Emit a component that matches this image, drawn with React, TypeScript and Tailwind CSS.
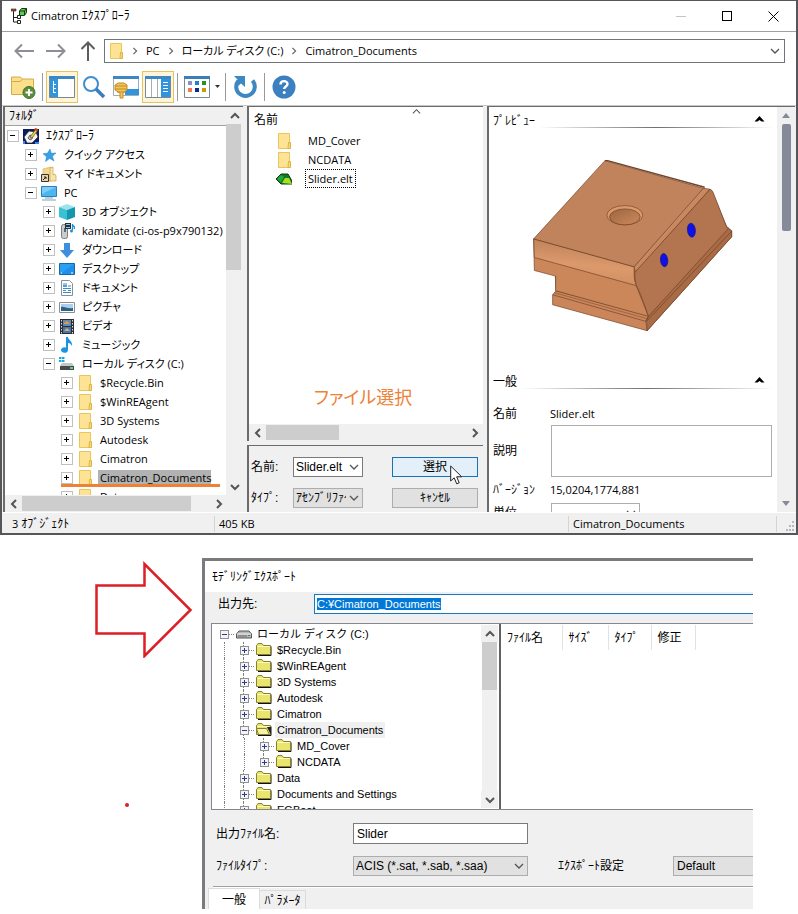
import { useEffect, useRef } from "react";
import type { ReactNode } from "react";

const UI = "font-['Open_Sans','Noto_Sans_CJK_JP',sans-serif] [font-feature-settings:'palt']";
const GOTHIC = "font-['Liberation_Sans','Noto_Sans_CJK_JP',sans-serif]";

/* ---------- small drawings ---------- */

function Chevron({ dir, size = 10, color = "#555", width = 2 }: { dir: "up" | "down" | "left" | "right"; size?: number; color?: string; width?: number }) {
  const d = { up: "M1 7l4-4 4 4", down: "M1 3l4 4 4-4", left: "M7 1L3 5l4 4", right: "M3 1l4 4-4 4" }[dir];
  return (
    <svg width={size} height={size} viewBox="0 0 10 10" fill="none" stroke={color} strokeWidth={width} className="shrink-0">
      <path d={d} />
    </svg>
  );
}

function Folder() {
  return (
    <svg width="16" height="16" viewBox="0 0 16 16" className="shrink-0">
      <path d="M2.500.5h11v15h-11z" fill="#ffe395" stroke="#e8c65c" />
      <path d="M12.500 9.500h2v6h-2.500z" fill="#fbd971" stroke="#dcb445" />
    </svg>
  );
}

function TreeIcon({ kind }: { kind: string }) {
  const box = { width: 16, height: 16, viewBox: "0 0 16 16", className: "shrink-0" };
  switch (kind) {
    case "explorer":
      return (
        <svg {...box}>
          <path d="M0 1h16v15H0z" fill="#0c1c5c" />
          <path d="M1 9l5-6 7 1 2 5-6 6H4z" fill="#f4f4f4" stroke="#222" strokeWidth=".7" />
          <path d="M5 10l2-3 3 1-1 3-2 1z" fill="#bbb" stroke="#222" strokeWidth=".6" />
          <path d="M7 9l6-8 2 1-6 8z" fill="#e9d53f" stroke="#4a3c10" strokeWidth=".6" />
          <path d="M12 0l3 1-1 2-3-1z" fill="#c43a1e" />
          <path d="M12 14h4v2h-4zM0 13h2v3H0z" fill="#3b82f6" />
        </svg>
      );
    case "star":
      return (
        <svg {...box}>
          <path d="M9 2l1.300 4.300L15 6l-3.600 3.200L13 14l-4.300-2.500L4.500 14.500l1-4.800L2 6.700l4.600-.6z" fill="#38a0e6" stroke="#2488d2" strokeWidth=".5" />
        </svg>
      );
    case "mydocs":
      return (
        <svg {...box}>
          <path d="M2 3l8-2v14H2z" fill="#f4d891" stroke="#d9b45c" strokeWidth=".7" />
          <path d="M9 2l3-1v8l2-1 1 2v5H9z" fill="#f8e5ae" stroke="#c9a04a" strokeWidth=".7" />
          <path d="M.5 8.500h7v7h-7z" fill="#e8d5ae" stroke="#333" />
          <path d="M2 14l3-3M3 11h2v2" stroke="#222" fill="none" />
        </svg>
      );
    case "pc":
      return (
        <svg {...box}>
          <path d="M.5 1.500h15v10H.5z" fill="#4bb5ef" stroke="#2b7fb2" />
          <path d="M1 2h14L1 9z" fill="#7dcdf7" />
          <path d="M4 13h8M1 15h14" stroke="#7aa3b8" />
        </svg>
      );
    case "cube":
      return (
        <svg {...box}>
          <path d="M8 0l8 3-8 3-8-3z" fill="#9be4ee" />
          <path d="M0 3l8 3v10l-8-3z" fill="#3cc0d4" />
          <path d="M16 3L8 6v10l8-3z" fill="#1596ad" />
        </svg>
      );
    case "phone":
      return (
        <svg {...box}>
          <rect x="2.500" y="1.500" width="6" height="14" rx="2" fill="#c9cccf" stroke="#7a7d80" />
          <path d="M5 5h2v4H5z" fill="#666" />
          <path d="M6 0h6v6H6z" fill="#27333d" />
          <path d="M7 1h4v1H7zM7 4h4v1H7z" fill="#8fc7e8" />
          <path d="M13.500 1v6M13.500 2l2 2v2" stroke="#1e8fd8" fill="none" strokeWidth="1.300" />
          <circle cx="12.500" cy="8" r="1.500" fill="#1e8fd8" />
        </svg>
      );
    case "download":
      return (
        <svg {...box}>
          <path d="M5 1h6v7h4l-7 8-7-8h4z" fill="#3e8fe0" />
        </svg>
      );
    case "desktop":
      return (
        <svg {...box}>
          <path d="M.5 2.500h15v11H.5z" fill="#2aa0f5" stroke="#1669a8" />
          <path d="M1 13L15 3v10z" fill="#1e90ea" />
          <path d="M2 12h1M12 12h2" stroke="#fff" />
        </svg>
      );
    case "document":
      return (
        <svg {...box}>
          <path d="M2.500.5h8l3 3v12h-11z" fill="#fff" stroke="#8a8f94" />
          <path d="M4 4h4M9 6h3M4 8.500h8M4 10.500h3M4 12.500h8M9 10.500h3" stroke="#3f8ac0" />
          <path d="M4 5h4v2H4z" fill="#4aa2dc" />
        </svg>
      );
    case "picture":
      return (
        <svg {...box}>
          <path d="M.5 3.500h15v10H.5z" fill="#fff" stroke="#8a8f94" />
          <path d="M2 5h12v7H2z" fill="#a9d0ee" />
          <path d="M2 8c3-1 6 2 12 1v3H2z" fill="#31627f" />
        </svg>
      );
    case "video":
      return (
        <svg {...box}>
          <path d="M1 1h14v15H1z" fill="#2e2e33" />
          <path d="M4 2h8v6H4z" fill="#6287b9" />
          <path d="M4 9h8v6H4z" fill="#4675b4" />
          <path d="M5 5l3-2 3 3H5z" fill="#d9a23c" />
          <path d="M5 13l3-3 3 3z" fill="#c9b56a" />
          <path d="M2.500 2v14M13.500 2v14" stroke="#ddd" strokeDasharray="1.500 1.500" />
        </svg>
      );
    case "music":
      return (
        <svg {...box}>
          <path d="M7 0h2c0 3 5 4 4 9-1-2-2-3-4-3v7a3.500 2.800 0 1 1-2-2.500z" fill="#1b94e6" />
        </svg>
      );
    case "drive":
      return (
        <svg {...box}>
          <path d="M0 1h2.500v2H0zM3 1h2.500v2H3zM0 4h2.500v2H0zM3 4h2.500v2H3z" fill="#1aa8e0" />
          <path d="M3 7h10l2 3H1z" fill="#c4c7ca" />
          <path d="M1 10h14v4H1z" fill="#444a4e" />
          <path d="M11 11h3v2h-3z" fill="#54d66a" />
        </svg>
      );
    default:
      return <Folder />;
  }
}

function PartPreview() {
  return (
    <svg width="201" height="175" viewBox="36 84 604 524" className="shrink-0" role="img" aria-label="Slider.elt" strokeLinejoin="round">
      <defs>
        <linearGradient id="fillet" x1="0" y1="0" x2="-.2" y2="1">
          <stop offset="0" stopColor="#c1835b" />
          <stop offset=".45" stopColor="#dc9a6c" />
          <stop offset="1" stopColor="#cb865a" />
        </linearGradient>
        <linearGradient id="edge" x1="0" y1="0" x2="1" y2="1">
          <stop offset="0" stopColor="#e0a177" />
          <stop offset="1" stopColor="#ad6f49" />
        </linearGradient>
        <linearGradient id="bore" x1="0" y1="0" x2="1" y2="1">
          <stop offset="0" stopColor="#9d6540" />
          <stop offset="1" stopColor="#cc8a5e" />
        </linearGradient>
      </defs>
      <g stroke="#6e4226" strokeWidth="2">
        <path d="M345 425L560 178q14-4 20 14l42 100 14 10v18L382 602l4-45z" fill="#b27550" />
        <path d="M106 438l238 0 44 118-280-74z" fill="#cb855a" />
        <path d="M98 494l10-12 280 76-10 14 4 30-284-78z" fill="#cb855a" />
        <path d="M98 494l280 80 8-16" fill="none" />
        <path d="M104 488l278 78" fill="none" stroke="#87563a" />
        <path d="M382 602L636 320v-18l-12-10-238 266-6 16z" fill="#a96b46" />
        <path d="M380 574L636 303" fill="none" />
        <path d="M41 326l302 84q2 34 6 56 20 50 37 93L107 482v-44l-64-17z" fill="#cb865a" />
        <path d="M41 326l302 84v26q0 18 8 31L43 382z" fill="url(#fillet)" />
        <path d="M255 91l300 84-212 235-302-84z" fill="#c1835b" />
        <path d="M343 410L551 174l20 3L347 427z" fill="url(#edge)" />
        <path d="M345 427L571 177q8 2 12 16l38 98q10 0 0 10l-235 258q-26-76-37-94-5-18-4-38z" fill="#b27550" />
        <path d="M255 91l8 0 292 80" fill="none" stroke="#70442c" strokeWidth="4" />
        <ellipse cx="315" cy="255" rx="54" ry="29" fill="#d99a6e" />
        <ellipse cx="315" cy="260" rx="46" ry="24" fill="url(#bore)" />
      </g>
      <ellipse cx="515" cy="300" rx="12" ry="21" fill="#1010e8" stroke="#1a1770" strokeWidth="2" transform="rotate(-6 515 300)" />
      <ellipse cx="433" cy="390" rx="11" ry="20" fill="#1010e8" stroke="#1a1770" strokeWidth="2" transform="rotate(-6 433 390)" />
    </svg>
  );
}

/* ---------- shared controls ---------- */

function ScrollButton({ dir, label }: { dir: "up" | "down" | "left" | "right"; label: string }) {
  return (
    <button type="button" aria-label={label} className="flex size-[17px] shrink-0 items-center justify-center bg-[#f0f0f0]">
      <Chevron dir={dir} />
    </button>
  );
}

function Select({ id, options, className }: { id: string; options: string[]; className: string }) {
  return (
    <div className={"relative " + className}>
      <select id={id} className="h-full w-full appearance-none rounded-none bg-transparent pr-4 pl-[2px] outline-none">
        {options.map((o) => (
          <option key={o}>{o}</option>
        ))}
      </select>
      <span className="pointer-events-none absolute inset-y-0 right-[3px] flex items-center">
        <Chevron dir="down" width={1.3} />
      </span>
    </div>
  );
}

/* ---------- explorer window ---------- */

function Separator() {
  return <span className="mx-[3px] h-7 w-px shrink-0 bg-[#9a9a9a]" />;
}

function Tool({ label, active, children }: { label: string; active?: boolean; children: ReactNode }) {
  return (
    <button
      type="button"
      aria-label={label}
      className={"flex size-8 shrink-0 items-center justify-center border " + (active ? "border-[#e5c365] bg-[#fdf4da]" : "border-transparent")}
    >
      {children}
    </button>
  );
}

function Toolbar() {
  return (
    <div className="flex h-[33px] items-center pl-[5px]">
      <Tool label="新規フォルダ">
        <svg width="26" height="24" viewBox="0 0 26 24" className="shrink-0">
          <path d="M1.500 5.500v-3.500h9l2 2h11v15.500h-22z" fill="#fbdf8b" stroke="#d4ab4a" />
          <path d="M1.500 6.500h9l2-2.500" fill="none" stroke="#d4ab4a" />
          <circle cx="19" cy="17.500" r="6" fill="#5b8f3c" stroke="#466f2e" />
          <path d="M19 14v7M15.500 17.500h7" stroke="#fff" strokeWidth="2" />
        </svg>
      </Tool>
      <Separator />
      <Tool label="フォルダ表示" active>
        <svg width="26" height="22" viewBox="0 0 26 22" className="shrink-0">
          <path d="M.5.5h25v21H.5z" fill="#fff" stroke="#7c8890" />
          <path d="M0 0h26v3H0z" fill="#3d87c2" />
          <path d="M1 3h8v18H1z" fill="#2f94de" />
          <path d="M4.500 5v12M4 8.500h3M4 12.500h3M4 16.500h3" stroke="#fff" fill="none" />
        </svg>
      </Tool>
      <Tool label="検索">
        <svg width="24" height="24" viewBox="0 0 24 24" fill="none" className="shrink-0">
          <circle cx="9" cy="9" r="7" stroke="#3d8fd0" strokeWidth="2" />
          <path d="M14 14l8 8" stroke="#3a7fbb" strokeWidth="3.500" />
        </svg>
      </Tool>
      <Tool label="フィルタ">
        <svg width="26" height="24" viewBox="0 0 26 24" className="shrink-0">
          <path d="M.5 1.500h25v19H.5z" fill="#fff" stroke="#a5adb3" />
          <path d="M0 1h26v3H0z" fill="#3d87c2" />
          <path d="M12 14h14v6H12z" fill="#2f94de" />
          <path d="M5 8h6l3 2v5l-4 3v5H7v-5l-5-3v-5z" fill="#f3c35b" stroke="#c38d24" />
          <path d="M2 11h12M2 14h12M4 17h8" stroke="#c38d24" />
        </svg>
      </Tool>
      <Tool label="プレビュー表示" active>
        <svg width="26" height="22" viewBox="0 0 26 22" className="shrink-0">
          <path d="M.5.5h25v21H.5z" fill="#fff" stroke="#7c8890" />
          <path d="M0 0h26v3H0z" fill="#3d87c2" />
          <path d="M6.500 3v18M12.500 3v18" stroke="#a5adb3" />
          <path d="M16 3h9v18h-9z" fill="#2f94de" />
          <path d="M18 6.500h5M18 9.500h5M18 12.500h5M18 15.500h5" stroke="#fff" />
        </svg>
      </Tool>
      <Separator />
      <Tool label="表示">
        <svg width="26" height="22" viewBox="0 0 26 22" className="shrink-0">
          <path d="M.5.5h25v21H.5z" fill="#fff" stroke="#7c8890" />
          <path d="M0 0h26v3H0z" fill="#3d7fb4" />
          <path d="M4 5h4v4H4z" fill="#8f8fc8" />
          <path d="M11 5h4v4h-4z" fill="#2480d0" />
          <path d="M18 5h4v4h-4z" fill="#259425" />
          <path d="M4 12h4v4H4z" fill="#f4784c" />
          <path d="M11 12h4v4h-4z" fill="#102a86" />
          <path d="M18 12h4v4h-4z" fill="#c99a0c" />
        </svg>
      </Tool>
      <button type="button" aria-label="表示オプション" className="flex h-8 w-[9px] shrink-0 items-center justify-center">
        <svg width="5" height="3" viewBox="0 0 5 3">
          <path d="M0 0h5L2.500 3z" fill="#333" />
        </svg>
      </button>
      <Separator />
      <Tool label="更新">
        <svg width="24" height="24" viewBox="0 0 24 24" fill="none" className="shrink-0">
          <path d="M19.500 5.500a9.300 9.300 0 1 1-14 0" stroke="#3d87c2" strokeWidth="4" />
          <path d="M1 1h11v11L8 8.500 5 11V5z" fill="#3d87c2" />
        </svg>
      </Tool>
      <Separator />
      <Tool label="ヘルプ">
        <svg width="24" height="24" viewBox="0 0 24 24" className="shrink-0">
          <circle cx="12" cy="12" r="11.500" fill="#3d80c0" />
          <path d="M8.500 9.500c0-4.500 7-4.300 7-.5 0 2.500-3.300 2.500-3.300 5" fill="none" stroke="#fff" strokeWidth="2.400" />
          <circle cx="12.200" cy="17.500" r="1.500" fill="#fff" />
        </svg>
      </Tool>
    </div>
  );
}

type Node = { level: number; open?: boolean; icon: string; text: string; half?: boolean; selected?: boolean };

const folders: Node[] = [
  { level: 0, open: true, icon: "explorer", text: "ｴｸｽﾌﾟﾛｰﾗ", half: true },
  { level: 1, icon: "star", text: "クイック アクセス" },
  { level: 1, icon: "mydocs", text: "マイ ドキュメント" },
  { level: 1, open: true, icon: "pc", text: "PC" },
  { level: 2, icon: "cube", text: "3D オブジェクト" },
  { level: 2, icon: "phone", text: "kamidate (ci-os-p9x790132)" },
  { level: 2, icon: "download", text: "ダウンロード" },
  { level: 2, icon: "desktop", text: "デスクトップ" },
  { level: 2, icon: "document", text: "ドキュメント" },
  { level: 2, icon: "picture", text: "ピクチャ" },
  { level: 2, icon: "video", text: "ビデオ" },
  { level: 2, icon: "music", text: "ミュージック" },
  { level: 2, open: true, icon: "drive", text: "ローカル ディスク (C:)" },
  { level: 3, icon: "folder", text: "$Recycle.Bin" },
  { level: 3, icon: "folder", text: "$WinREAgent" },
  { level: 3, icon: "folder", text: "3D Systems" },
  { level: 3, icon: "folder", text: "Autodesk" },
  { level: 3, icon: "folder", text: "Cimatron" },
  { level: 3, icon: "folder", text: "Cimatron_Documents", selected: true },
  { level: 3, icon: "folder", text: "Data" },
];

const indents = ["pl-[2px]", "pl-[20px]", "pl-[38px]", "pl-[56px]"];

function FolderPane() {
  return (
    <section className="flex w-[240px] shrink-0 flex-col border-t border-l-2 border-[#6b6b6b] bg-white">
      <div className="flex h-[388px]">
        <div className="relative min-w-0 flex-1 overflow-hidden">
          <h2 className="h-[19px] border-b border-[#a0a0a0] bg-[#f0f0f0] pl-1 text-[12px] leading-[18px]">ﾌｫﾙﾀﾞ</h2>
          <ul>
            {folders.map((n) => (
              <li key={n.text} className={"flex h-[19px] items-center whitespace-nowrap " + indents[n.level]}>
                <button type="button" aria-label={(n.open ? "閉じる " : "開く ") + n.text} className="flex size-3 shrink-0 items-center justify-center border border-[#c0c0c0]">
                  <svg width="6" height="6" viewBox="0 0 6 6" stroke="#000">
                    <path d={n.open ? "M0 2.500h5" : "M0 2.500h5M2.500 0v5"} />
                  </svg>
                </button>
                <span className="ml-1 flex">
                  <TreeIcon kind={n.icon} />
                </span>
                <span className={"ml-[5px] pl-[2px] leading-4 " + (n.half ? "text-[12px] " : "") + (n.selected ? "bg-[#b2b2b2]" : "")}>{n.text}</span>
              </li>
            ))}
          </ul>
          <div className="absolute top-[377px] left-[56px] h-[3px] w-[159px] bg-[#ed8136]" />
        </div>
        <div className="flex w-[17px] shrink-0 flex-col bg-[#f0f0f0]">
          <ScrollButton dir="up" label="上へ" />
          <div className="mr-[2px] h-[146px] bg-[#cdcdcd]" />
          <div className="flex-1" />
          <ScrollButton dir="down" label="下へ" />
        </div>
      </div>
      <div className="flex h-[17px] items-center bg-[#f0f0f0] pr-4">
        <ScrollButton dir="left" label="左へ" />
        <div className="h-[15px] w-[169px] bg-[#cdcdcd]" />
        <div className="flex-1" />
        <ScrollButton dir="right" label="右へ" />
      </div>
    </section>
  );
}

function FilePane() {
  return (
    <div className="flex w-[236px] shrink-0 flex-col gap-[4px]">
      <section className="relative flex h-[335px] flex-col border-t border-l-2 border-[#6b6b6b] bg-white">
        <span className="absolute top-0 left-[163px]">
          <Chevron dir="up" size={9} width={1.2} />
        </span>
        <h2 className="pt-[2px] pl-[5px] text-[12px] leading-[22px]">名前</h2>
        <ul>
          {["MD_Cover", "NCDATA"].map((f) => (
            <li key={f} className="flex h-[19px] items-center pl-[27px]">
              <Folder />
              <span className="ml-4">{f}</span>
            </li>
          ))}
          <li className="flex h-[19px] items-center pl-[27px]">
            <svg width="16" height="12" viewBox="0 0 16 12" className="shrink-0">
              <path d="M0 6l5-5h7l4 7v3H5z" fill="#127a1e" stroke="#0a3a10" />
              <path d="M6 10l3-5h4l3 6z" fill="#a6e022" />
              <path d="M1 6l4-4 3 2-3 5z" fill="#23a83a" />
            </svg>
            <span className="ml-[13px] border border-dotted border-black px-[2px] leading-[17px]">Slider.elt</span>
          </li>
        </ul>
        <p className="flex flex-1 items-end justify-center pr-[6px] pb-[11px] text-[18px] leading-8 text-[#ed8136]">ファイル選択</p>
        <div className="flex h-[17px] items-center bg-[#f0f0f0]">
          <ScrollButton dir="left" label="左へ" />
          <div className="h-[15px] w-[73px] bg-[#cdcdcd]" />
          <div className="flex-1" />
          <ScrollButton dir="right" label="右へ" />
        </div>
      </section>
      <form className={"relative flex flex-1 flex-col gap-[11px] border-t border-l-2 border-[#6b6b6b] pt-[11px] text-[12px] " + GOTHIC} onSubmit={(e) => e.preventDefault()}>
        <div className="flex items-center pl-[2px]">
          <label htmlFor="pick-name" className="w-[42px] leading-4">名前:</label>
          <Select id="pick-name" options={["Slider.elt"]} className="h-5 w-[70px] border border-[#7a7a7a] bg-white" />
          <button type="submit" className="ml-[29px] h-5 w-[86px] border border-[#1673b8] bg-[#e3f0fa]">選択</button>
        </div>
        <div className="flex items-center pl-[2px]">
          <label htmlFor="pick-type" className="w-[42px] leading-4">ﾀｲﾌﾟ:</label>
          <Select id="pick-type" options={["ｱｾﾝﾌﾞﾘﾌｧｲﾙ"]} className="h-5 w-[70px] border border-[#adadad] bg-[#e1e1e1]" />
          <button type="button" className="ml-[29px] h-5 w-[86px] border border-[#adadad] bg-[#e1e1e1]">ｷｬﾝｾﾙ</button>
        </div>
        <svg width="13" height="20" viewBox="0 0 13 20" className="pointer-events-none absolute top-[19px] left-[201px]">
          <path d="M.7 1v15l3.500-3.200 2.500 6 2.500-1-2.500-6h5z" fill="#fff" stroke="#222" />
        </svg>
      </form>
    </div>
  );
}

function GroupTitle({ children }: { children: ReactNode }) {
  return (
    <div className="flex h-[22px] items-end pr-1">
      <h2 className="shrink-0">{children}</h2>
      <div className="relative flex h-full flex-1 items-end">
        <span className="mb-px ml-1 h-px flex-1 bg-linear-to-r from-white via-[#707070] to-white" />
        <button type="button" aria-label="折りたたむ" className="absolute top-2 right-2 flex">
          <svg width="11" height="7" viewBox="0 0 11 7">
            <path d="M.5 6.500L5.500 1l5 5.500H7.500l-2-1.500-2 1.500z" fill="#000" />
          </svg>
        </button>
      </div>
    </div>
  );
}

function PreviewPane() {
  return (
    <section className="flex h-[406px] min-w-0 flex-1 border-t border-l-2 border-[#6b6b6b] bg-white">
      <div className="min-w-0 flex-1 overflow-hidden pl-[4px] text-[12px]">
        <GroupTitle>ﾌﾟﾚﾋﾞｭｰ</GroupTitle>
        <div className="flex h-[239px] justify-center pt-[29px] pr-[5px]">
          <PartPreview />
        </div>
        <GroupTitle>一般</GroupTitle>
        <dl className="grid grid-cols-[57px_1fr] items-center pt-[13px] pr-[5px]">
          <dt>名前</dt>
          <dd className="text-[11px] leading-[22px]">Slider.elt</dd>
          <dt>
            <label htmlFor="desc">説明</label>
          </dt>
          <dd className="flex pl-px">
            <textarea id="desc" className="h-[52px] w-full resize-none border border-[#adadad]" />
          </dd>
          <dt>ﾊﾞｰｼﾞｮﾝ</dt>
          <dd className="text-[11px] leading-[26px]">15,0204,1774,881</dd>
          <dt>
            <label htmlFor="unit">単位</label>
          </dt>
          <dd className="pl-px">
            <Select id="unit" options={[""]} className="h-5 w-[89px] border border-[#adadad]" />
          </dd>
        </dl>
      </div>
      <div className="flex w-[18px] shrink-0 flex-col items-center bg-[#f0f0f0]">
        <button type="button" aria-label="上へ" className="flex h-[17px] items-center">
          <svg width="8" height="5" viewBox="0 0 8 5"><path d="M0 5l4-5 4 5z" fill="#868999" /></svg>
        </button>
        <div className="h-[107px] w-[9px] rounded-[2px] bg-[#868999]" />
        <div className="flex-1" />
        <button type="button" aria-label="下へ" className="flex h-[17px] items-center">
          <svg width="8" height="5" viewBox="0 0 8 5"><path d="M0 0l4 5 4-5z" fill="#868999" /></svg>
        </button>
      </div>
    </section>
  );
}

function Crumb() {
  return (
    <span className="mx-[7px] flex">
      <Chevron dir="right" size={8} color="#666" width={1.5} />
    </span>
  );
}

function ExplorerWindow() {
  return (
    <div className={"border-2 border-t border-[#55555a] bg-white text-[11px] leading-4 text-black " + UI}>
      <header className="flex h-[31px] items-center border-b border-[#a0a0a0] pl-[9px]">
        <svg width="16" height="16" viewBox="0 0 16 16" fill="none" className="shrink-0">
          <path d="M2.500 3v11h4M2.500 9.500h4" stroke="#222" />
          <path d="M0 1h5v2H0z" fill="#b24a2a" stroke="#222" strokeWidth=".6" />
          <path d="M6.500 7.500h3v3h-3zM6.500 12.500h3v3h-3z" fill="#fff" stroke="#222" />
          <path d="M8.500 3l2-2.500h5v4l-2 3h-5z" fill="#63c956" stroke="#163a12" />
          <path d="M8.500 3h5v4M13.500 3l2-2.500" stroke="#163a12" />
        </svg>
        <h1 className="ml-1 flex-1">
          Cimatron <span className="text-[12px]">ｴｸｽﾌﾟﾛｰﾗ</span>
        </h1>
        <button type="button" aria-label="最小化" className="flex w-[46px] justify-center">
          <span className="h-px w-[10px] bg-[#c4c4c4]" />
        </button>
        <button type="button" aria-label="最大化" className="flex w-[46px] justify-center">
          <span className="size-[10px] border border-black" />
        </button>
        <button type="button" aria-label="閉じる" className="flex w-[46px] justify-center">
          <svg width="11" height="11" viewBox="0 0 11 11" stroke="#000"><path d="M.5.5l10 10M10.500.5l-10 10" /></svg>
        </button>
      </header>

      <div className="flex h-[38px] items-center pr-[11px] pl-3">
        <button type="button" aria-label="戻る" className="w-8">
          <svg width="20" height="16" viewBox="0 0 20 16" fill="none" stroke="#8e8e94" strokeWidth="2"><path d="M20 8H1M8 1.500L1.500 8 8 14.500" /></svg>
        </button>
        <button type="button" aria-label="進む" className="w-[34px]">
          <svg width="20" height="16" viewBox="0 0 20 16" fill="none" stroke="#8e8e94" strokeWidth="2"><path d="M0 8h19M12 1.500L18.500 8 12 14.500" /></svg>
        </button>
        <button type="button" aria-label="上の階層へ" className="w-6">
          <svg width="16" height="20" viewBox="0 0 16 20" fill="none" stroke="#5d5d60" strokeWidth="2"><path d="M8 20V1M1.500 8L8 1.500 14.500 8" /></svg>
        </button>
        <nav className="flex h-6 flex-1 items-center border border-[#70757c] pr-1 pl-[3px]">
          <Folder />
          <Crumb />
          <button type="button">PC</button>
          <Crumb />
          <button type="button">ローカル ディスク (C:)</button>
          <Crumb />
          <button type="button">Cimatron_Documents</button>
          <button type="button" aria-label="履歴" className="ml-auto">
            <Chevron dir="down" width={1.3} />
          </button>
        </nav>
      </div>

      <Toolbar />

      <main className="mt-[2px] flex gap-[4px] border-t border-[#c8c8c8] bg-[#f0f0f0] pr-px pl-px">
        <FolderPane />
        <FilePane />
        <PreviewPane />
      </main>

      <footer className="flex h-[21px] items-center border-t border-white bg-[#f0f0f0] pt-px">
        <span className="w-[213px] border-r border-[#d4d4d4] pl-[10px]">
          3 <span className="text-[12px]">ｵﾌﾞｼﾞｪｸﾄ</span>
        </span>
        <span className="flex-1 pl-1">405 KB</span>
        <span className="w-[209px] border-x border-[#d4d4d4] pl-1">Cimatron_Documents</span>
        <svg width="19" height="16" viewBox="0 0 19 16" className="shrink-0" fill="#b8b8b8">
          <path d="M15 5h2v2h-2zM12 9h2v2h-2zM15 9h2v2h-2zM9 13h2v2H9zM12 13h2v2h-2zM15 13h2v2h-2z" />
        </svg>
      </footer>
    </div>
  );
}

/* ---------- export dialog ---------- */

type Entry = { level: number; open?: boolean; text: string; last?: boolean };

const entries: Entry[] = [
  { level: 0, open: true, text: "ローカル ディスク (C:)" },
  { level: 1, text: "$Recycle.Bin" },
  { level: 1, text: "$WinREAgent" },
  { level: 1, text: "3D Systems" },
  { level: 1, text: "Autodesk" },
  { level: 1, text: "Cimatron" },
  { level: 1, open: true, text: "Cimatron_Documents" },
  { level: 2, text: "MD_Cover" },
  { level: 2, text: "NCDATA", last: true },
  { level: 1, text: "Data" },
  { level: 1, text: "Documents and Settings" },
  { level: 1, text: "EGBoot" },
];

function Guide() {
  return (
    <span className="flex h-4 w-5 shrink-0 justify-center">
      <span className="border-l border-dotted border-[#808080]" />
    </span>
  );
}

function ClassicIcon({ entry }: { entry: Entry }) {
  if (entry.level === 0)
    return (
      <svg width="16" height="16" viewBox="0 0 16 16" className="shrink-0">
        <path d="M3 5h10l2.500 3v4H.5V8z" fill="#b8b8b8" stroke="#555" />
        <path d="M1 8h14" stroke="#eee" />
        <path d="M2 10h9" stroke="#666" />
        <path d="M12 9h2v1h-2z" fill="#2a2" />
      </svg>
    );
  return (
    <svg width="16" height="16" viewBox="0 0 16 16" className="shrink-0">
      <path d="M2 13.500h13V4.500" fill="none" stroke="#111" />
      <path d="M.5 12.500v-9l1.500-2h4l1.500 2h7v9z" fill="#ebe56e" stroke="#85812e" />
      <path d="M1.500 4.500h12" stroke="#fbf9c4" />
      {entry.open && (
        <>
          <path d="M11 5h4v8z" fill="#222" />
          <path d="M.5 6.500h10l3 6h-11z" fill="#f7f3a4" stroke="#85812e" />
        </>
      )}
    </svg>
  );
}

function ExportTree() {
  return (
    <ul className="min-w-0 flex-1 overflow-hidden pt-[2px] pl-[2px] text-[11px]">
      {entries.map((e) => (
        <li key={e.text} className="flex h-4 items-center whitespace-nowrap">
          {e.level > 0 && <Guide />}
          {e.level > 1 && <Guide />}
          <span className="relative flex h-4 w-5 shrink-0 items-center justify-center">
            {e.level > 0 && <span className={"absolute top-0 left-[9px] border-l border-dotted border-[#808080] " + (e.last ? "h-2" : "h-4")} />}
            <span className="absolute top-2 left-3 w-2 border-t border-dotted border-[#808080]" />
            <button type="button" aria-label={(e.open ? "閉じる " : "開く ") + e.text} className="relative flex size-[9px] items-center justify-center border border-[#919191] bg-[#f4f4f8]">
              <svg width="5" height="5" viewBox="0 0 5 5" stroke="#2c3c8c">
                <path d={e.open ? "M0 2.500h5" : "M0 2.500h5M2.500 0v5"} />
              </svg>
            </button>
          </span>
          <span className="ml-[2px] flex">
            <ClassicIcon entry={e} />
          </span>
          <span className={"ml-[3px] px-[2px] leading-4 " + (e.level === 1 && e.open ? "bg-[#f0f0f0]" : "")}>{e.text}</span>
        </li>
      ))}
    </ul>
  );
}

function ExportDialog() {
  const dest = useRef<HTMLInputElement>(null);
  useEffect(() => {
    dest.current?.focus();
    dest.current?.select();
  }, []);

  return (
    <div className={"h-[351px] min-w-0 flex-1 overflow-hidden border-t-[3px] border-l-[3px] border-[#7b7b7f] bg-[#f0f0f0] text-[12px] leading-4 text-black " + GOTHIC}>
      <h1 className="h-[31px] bg-white pl-[7px] leading-[33px]">ﾓﾃﾞﾘﾝｸﾞｴｸｽﾎﾟｰﾄ</h1>
      <div className="flex items-center pt-[2px] pl-[13px]">
        <label htmlFor="dest" className="w-[96px]">出力先:</label>
        <input
          id="dest"
          ref={dest}
          defaultValue="C:¥Cimatron_Documents"
          className="h-5 min-w-0 flex-1 border border-r-0 border-[#2a74ad] bg-white px-[2px] text-[11px] ring-2 ring-[#e3f2fb] outline-none selection:bg-[#0078d7] selection:text-white"
        />
      </div>

      <div className="mt-[9px] ml-[6px] flex h-[187px] border border-r-0 border-[#828790] bg-white">
        <div className="flex w-[289px] shrink-0 border-r-2 border-[#626262] pr-[2px]">
          <ExportTree />
          <div className="my-px flex w-[15px] shrink-0 flex-col items-center bg-[#f0f0f0]">
            <ScrollButton dir="up" label="上へ" />
            <div className="h-12 w-full bg-[#cdcdcd]" />
            <div className="flex-1" />
            <ScrollButton dir="down" label="下へ" />
          </div>
        </div>
        <table className="mt-px h-[25px] table-fixed border-collapse text-left">
          <thead>
            <tr>
              <th className="w-[61px] border-r border-[#e2e2e2] pl-[6px] font-normal">ﾌｧｲﾙ名</th>
              <th className="w-[46px] border-r border-[#e2e2e2] pl-[6px] font-normal">ｻｲｽﾞ</th>
              <th className="w-[43px] border-r border-[#e2e2e2] pl-[6px] font-normal">ﾀｲﾌﾟ</th>
              <th className="w-[44px] border-r border-[#e2e2e2] pl-[6px] font-normal">修正</th>
            </tr>
          </thead>
        </table>
      </div>

      <div className="mt-[13px] flex items-center pl-[11px]">
        <label htmlFor="out-name" className="w-[137px]">出力ﾌｧｲﾙ名:</label>
        <input id="out-name" defaultValue="Slider" className="h-[21px] w-[175px] border border-[#7a7a7a] bg-white px-[3px] outline-none" />
      </div>
      <div className="mt-[12px] flex items-center pl-[11px]">
        <label htmlFor="out-type" className="w-[137px] shrink-0">ﾌｧｲﾙﾀｲﾌﾟ:</label>
        <Select id="out-type" options={["ACIS (*.sat, *.sab, *.saa)"]} className="h-5 w-[175px] shrink-0 border border-[#adadad] bg-[#e1e1e1]" />
        <label htmlFor="preset" className="ml-[30px] w-[115px] shrink-0">ｴｸｽﾎﾟｰﾄ設定</label>
        <select id="preset" className="h-5 min-w-0 flex-1 appearance-none rounded-none border border-r-0 border-[#adadad] bg-[#e1e1e1] pl-[3px] outline-none">
          <option>Default</option>
        </select>
      </div>
      <div className="mt-[10px] ml-2 h-[2px] border-t border-[#a0a0a0] bg-white" />
      <div role="tablist" className="ml-[3px] flex h-[22px] items-end">
        <button type="button" role="tab" aria-selected="true" className="h-[22px] w-[52px] border border-b-0 border-[#dcdcdc] bg-white">一般</button>
        <button type="button" role="tab" aria-selected="false" className="h-5 w-[46px] border border-b-0 border-l-0 border-[#dcdcdc]">ﾊﾟﾗﾒｰﾀ</button>
      </div>
    </div>
  );
}

export default function App() {
  return (
    <div className="min-h-screen bg-white pb-[5px]">
      <ExplorerWindow />
      <div className="mt-[23px] flex pr-[45px]">
        <div className="flex w-[202px] shrink-0 flex-col pt-[3px]">
          <svg width="98" height="97" viewBox="0 0 98 97" className="ml-[95px]" fill="none">
            <path d="M1.500 24.500h48V3l46 46-46 46V72.500h-48z" stroke="#dc1f26" strokeWidth="2.500" />
          </svg>
          <span className="mt-[145px] ml-[125px] size-1 rounded-full bg-[#d62229]" />
        </div>
        <ExportDialog />
      </div>
    </div>
  );
}
